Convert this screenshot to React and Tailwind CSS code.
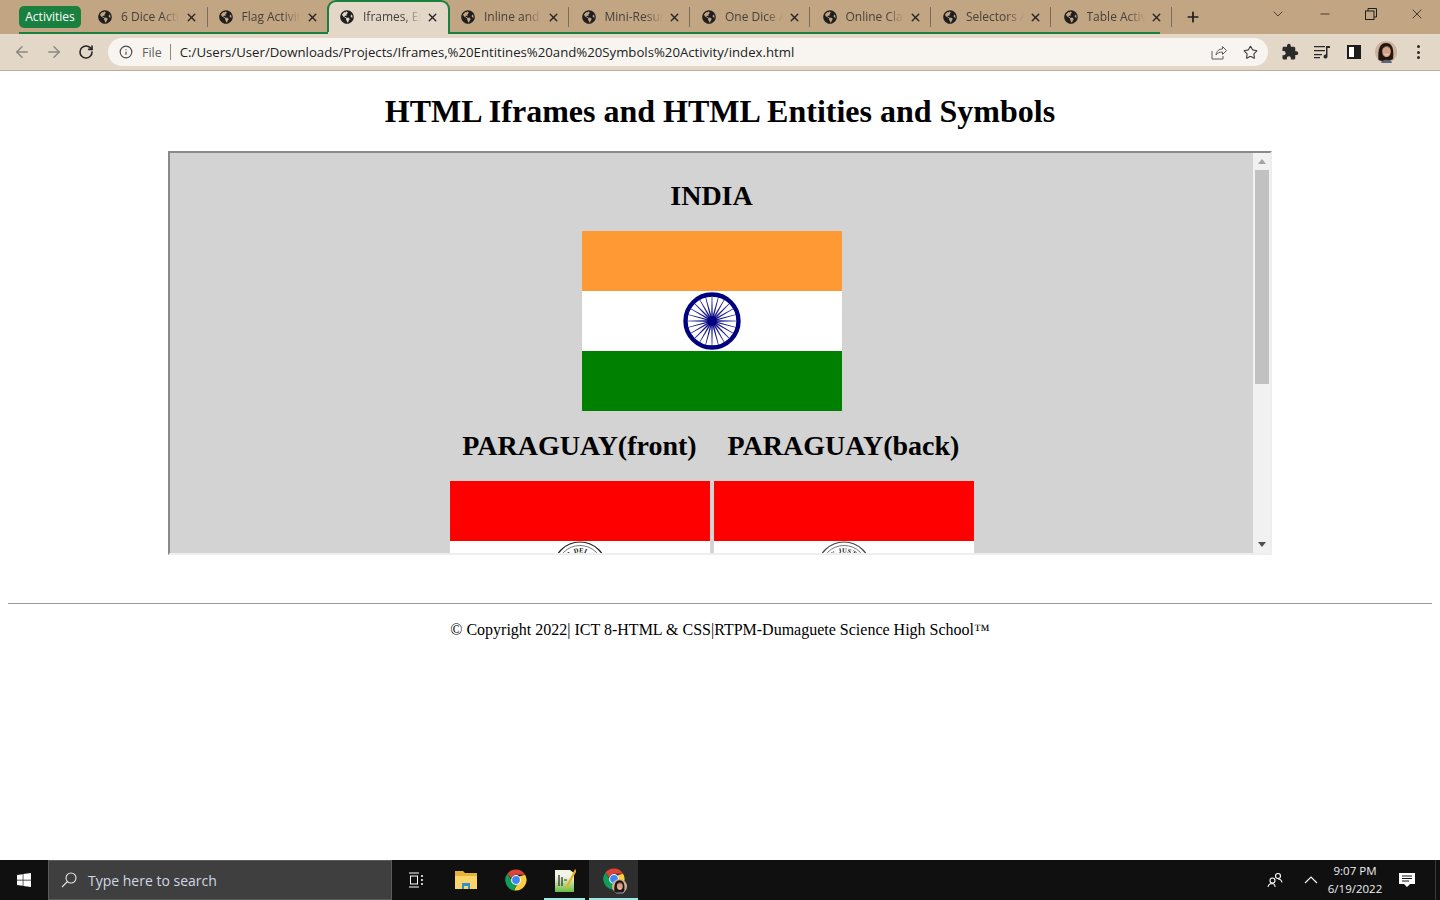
import React from 'react';
import { ArrowLeft, ArrowRight, RotateCw, Info, Star, X, Plus, ChevronDown, Minus } from 'lucide-react';
import { FaGlobeAmericas, FaWindows } from 'react-icons/fa';
import { MdExtension } from 'react-icons/md';

const tabs = [
  { title: '6 Dice Activity' },
  { title: 'Flag Activity' },
  { title: 'Iframes, Entities', active: true },
  { title: 'Inline and Block', afterActive: true },
  { title: 'Mini-Resume', afterActive: true },
  { title: 'One Dice Activity', afterActive: true },
  { title: 'Online Class', afterActive: true },
  { title: 'Selectors Activity', afterActive: true },
  { title: 'Table Activity', afterActive: true },
];

const Tab = ({ title, active, afterActive }) => (
  <div className={active
    ? 'relative z-10 -mx-px flex h-full w-[122.5px] shrink-0 items-center rounded-t-[9px] border-x-2 border-t-2 border-[#1a8040] bg-[#e3d7c8] pb-[2px] pl-[11px]'
    : `relative flex h-full w-[120.5px] shrink-0 items-center ${afterActive ? 'pl-[12.5px]' : 'pl-[11px]'}`}>
    <FaGlobeAmericas className="h-[14px] w-[14px] shrink-0 text-[#1f1f1f]" />
    <span className="ml-[9px] w-[58px] overflow-hidden whitespace-nowrap text-[12px] text-[#45413b] [mask-image:linear-gradient(to_right,black_70%,transparent_100%)]">
      {title}
    </span>
    <X className={`${active || afterActive ? 'ml-[5px]' : 'ml-[6px]'} h-[13px] w-[13px] shrink-0 text-[#262626]`} strokeWidth={2.6} />
    {!active && <span className="absolute right-0 top-[7px] h-[20px] w-px bg-[#7a6c5b]" />}
  </div>
);

const Chakra = () => {
  const spokes = Array.from({ length: 24 }, (_, i) => i * 15);
  return (
    <svg viewBox="0 0 60 60" className="h-[60px] w-[60px]">
      <circle cx="30" cy="30" r="26.5" fill="white" stroke="#000080" strokeWidth="4.4" />
      {spokes.map((a) => (
        <polygon key={a} points="29.1,30 30.9,30 30.3,5 29.7,5" fill="#1a1a8c" transform={`rotate(${a} 30 30)`} />
      ))}
      <circle cx="30" cy="30" r="4.8" fill="#000080" />
    </svg>
  );
};

// only the top of each seal shows above the frame's bottom edge
const Seal = ({ id, label, stroke }) => (
  <svg viewBox="0 0 60 60" className="h-[60px] w-[60px]">
    <circle cx="30" cy="27.5" r="26.5" fill="white" stroke={stroke} strokeWidth="1.200" />
    <circle cx="30" cy="27.5" r="23" fill="none" stroke="#777" strokeWidth="1" />
    <path id={id} d="M14 27.500 A16 16 0 0 1 46 27.500" fill="none" />
    <text fontFamily="'Liberation Serif', serif" fontSize="6.500" fontWeight="700" fill="#111" textAnchor="middle" letterSpacing="0.3">
      <textPath href={`#${id}`} startOffset="50%">{label}</textPath>
    </text>
  </svg>
);

const Flag = ({ top, mid, bottom, children }) => (
  <div className="w-[260px]">
    <div className="h-[60px]" style={{ backgroundColor: top }} />
    <div className="flex h-[60px] items-center justify-center" style={{ backgroundColor: mid }}>{children}</div>
    <div className="h-[60px]" style={{ backgroundColor: bottom }} />
  </div>
);

const ChromeLogo = ({ size = 24 }) => (
  <svg viewBox="0 0 48 48" width={size} height={size}>
    <path fill="#db4437" d="M24 3a21 21 0 0 1 18.200 10.500H24a10.500 10.500 0 0 0-10 7.300L7.100 11A21 21 0 0 1 24 3z" />
    <path fill="#0f9d58" d="M24 45A21 21 0 0 1 7.100 11L16 26.500a10.500 10.500 0 0 0 11 7.100L19 44.400A21 21 0 0 1 24 45z" />
    <path fill="#ffcd40" d="M42.200 13.500A21 21 0 0 1 20 44.600l9.100-15.700A10.500 10.500 0 0 0 31 16.500z" />
    <circle cx="24" cy="24" r="9.800" fill="white" />
    <circle cx="24" cy="24" r="7.800" fill="#4285f4" />
  </svg>
);

const Avatar = ({ size = 22 }) => (
  <svg viewBox="0 0 22 22" width={size} height={size}>
    <circle cx="11" cy="11" r="11" fill="#c9b29b" />
    <path d="M3.500 19 C2.500 8 5 2 11 2 C17.500 2 19 8 18 18 L14 20 L7 20 Z" fill="#231512" />
    <ellipse cx="11.500" cy="10.500" rx="4.300" ry="5.500" fill="#d6a287" />
    <path d="M7.500 7.500 C9 6 13 5 15.500 8 C14 5 9 4.500 7.500 7.500 Z" fill="#231512" />
    <path d="M9.500 13.200 C10.500 14 12.500 14 13.500 13.200" stroke="#fff" strokeWidth="0.700" fill="none" />
    <path d="M6 22 C7 18 16 17.500 17 22 Z" fill="#5b6478" />
  </svg>
);

const BrowserChrome = () => (
  <div className="shrink-0 font-['Open_Sans',sans-serif]">
    <div className="flex h-[34px] bg-[#c2a583]">
      <div className="relative ml-[19px] flex h-full items-stretch">
        <div className="mt-[6px] flex h-[22px] w-[62px] items-center justify-center rounded-[5px] bg-[#1a8040] text-[12px] text-white">Activities</div>
        <div className="ml-[6px] flex h-full">
          {tabs.map((t) => (
            <Tab key={t.title} {...t} />
          ))}
        </div>
        <div className="absolute bottom-0 left-0 h-[2px] w-[1141px] bg-[#1a8040]" />
        <div className="absolute bottom-0 left-[309px] z-20 h-[2px] w-[120px] bg-[#e3d7c8]" />
      </div>
      <Plus className="ml-[13px] mt-[9px] h-[16px] w-[16px] text-[#1f1f1f]" strokeWidth={2.6} />
      <div className="ml-auto flex h-full items-start">
        <ChevronDown className="mr-[32px] mt-[6px] h-[16px] w-[16px] text-[#3a342c]" strokeWidth={1.3} />
        <Minus className="mr-[33px] mt-[7px] h-[14px] w-[14px] text-[#1f1f1f]" strokeWidth={1.3} />
        <svg viewBox="0 0 12 12" className="mr-[32px] mt-[8px] h-[12px] w-[12px] text-[#1f1f1f]" fill="none" stroke="currentColor">
          <path d="M3 3V.5h8.500V9H9" />
          <rect x=".5" y="3" width="8.500" height="8.500" />
        </svg>
        <X className="mr-[15px] mt-[6px] h-[16px] w-[16px] text-[#1f1f1f]" strokeWidth={1.2} />
      </div>
    </div>
    <div className="flex h-[37px] items-center border-b border-[#b9ad9f] bg-[#e3d7c8]">
      <ArrowLeft className="ml-[13px] h-[18px] w-[18px] text-[#8d8881]" strokeWidth={2} />
      <ArrowRight className="ml-[14px] h-[18px] w-[18px] text-[#8d8881]" strokeWidth={2} />
      <RotateCw className="ml-[15px] h-[16px] w-[16px] text-[#262626]" strokeWidth={2.4} />
      <div className="ml-[14px] flex h-[28px] w-[1160px] items-center rounded-full bg-[#f8f5f1] pl-[11px] pr-[10px]">
        <Info className="h-[14px] w-[14px] text-[#4a4a4a]" strokeWidth={2} />
        <span className="ml-[9px] pt-[2px] text-[12.5px] text-[#5f5f5f]">File</span>
        <span className="ml-[8px] h-[16px] w-px bg-[#8d8881]" />
        <span className="ml-[9px] whitespace-nowrap pt-[2px] text-[13.2px] text-[#222]">C:/Users/User/Downloads/Projects/Iframes,%20Entitines%20and%20Symbols%20Activity/index.html</span>
        <svg viewBox="0 0 16 16" className="ml-auto h-[16px] w-[16px] text-[#5c5c5c]" fill="none" stroke="currentColor" strokeWidth="1">
          <path d="M1 7v8h11v-3" />
          <path d="M5 11c.5-4 3-6 6.500-6V2.500L15.500 6.500l-4 4V8c-3 0-5 1-6.500 3z" />
        </svg>
        <Star className="ml-[16px] h-[15px] w-[15px] text-[#3f3f3f]" strokeWidth={1.8} />
      </div>
      <MdExtension className="ml-[13px] h-[18px] w-[18px] text-[#2a2a2a]" />
      <svg viewBox="0 0 16 14" className="ml-[15px] h-[14px] w-[16px] text-[#2a2a2a]" fill="currentColor">
        <path d="M0 1h11v1.300H0zM0 5h11v1.300H0zM0 9h8v1.300H0zM0 12h6v1.300H0z" />
        <path d="M12 1h4v2h-2.500v8.500a2 2 0 1 1-1.500-1.900z" />
      </svg>
      <div className="ml-[17px] flex h-[14px] w-[14px] justify-end border-2 border-[#1c1c1c] bg-white">
        <div className="h-full w-[5px] bg-[#1c1c1c]" />
      </div>
      <div className="ml-[14px]"><Avatar /></div>
      <div className="ml-[20px] flex flex-col gap-[2.500px]">
        <span className="h-[3px] w-[3px] rounded-full bg-[#2a2a2a]" />
        <span className="h-[3px] w-[3px] rounded-full bg-[#2a2a2a]" />
        <span className="h-[3px] w-[3px] rounded-full bg-[#2a2a2a]" />
      </div>
    </div>
  </div>
);

const FlagFrame = () => (
  <div className="mx-[168px] mt-[21px] flex h-[404px] overflow-hidden border-2 border-b-[#eeeeee] border-l-[#8a8a8a] border-r-[#eeeeee] border-t-[#8a8a8a] bg-[#d3d3d3]">
    <div className="flex-1 overflow-hidden text-center font-['Liberation_Serif',serif]">
      <h2 className="mt-[27px] text-[28px] font-bold leading-[32px] text-black">INDIA</h2>
      <div className="mt-[19px] flex justify-center">
        <Flag top="#ff9933" mid="#ffffff" bottom="#008000"><Chakra /></Flag>
      </div>
      <div className="mt-[19px] flex justify-center gap-[4px]">
        <h2 className="w-[260px] text-[28px] font-bold leading-[32px] text-black">PARAGUAY(front)</h2>
        <h2 className="w-[260px] text-[28px] font-bold leading-[32px] text-black">PARAGUAY(back)</h2>
      </div>
      <div className="mt-[19px] flex justify-center gap-[4px]">
        <Flag top="#ff0000" mid="#ffffff" bottom="#0038a8"><Seal id="seal-front" label="REPUBLICA DEL PARAGUAY" stroke="#222" /></Flag>
        <Flag top="#ff0000" mid="#ffffff" bottom="#0038a8"><Seal id="seal-back" label="PAZ Y JUSTICIA" stroke="#444" /></Flag>
      </div>
    </div>
    <div className="flex w-[17px] shrink-0 flex-col items-center bg-[#f1f1f1]">
      <span className="mt-[6px] h-0 w-0 border-x-[4px] border-b-[5px] border-x-transparent border-b-[#a3a3a3]" />
      <div className="mt-[6px] h-[214px] w-[14px] bg-[#c1c1c1]" />
      <span className="mb-[6px] mt-auto h-0 w-0 border-x-[4px] border-t-[5px] border-x-transparent border-t-[#505050]" />
    </div>
  </div>
);

const Taskbar = () => (
  <div className="flex h-[40px] shrink-0 items-stretch bg-[#101010] font-['Open_Sans',sans-serif] text-white">
    <div className="flex w-[48px] items-center justify-center">
      <FaWindows className="h-[16px] w-[16px]" />
    </div>
    <div className="flex w-[344px] items-center border border-[#5b5b5b] bg-[#3f3f3f] pl-[12px]">
      <svg viewBox="0 0 16 16" className="h-[16px] w-[16px] text-[#e6e6e6]" fill="none" stroke="currentColor" strokeWidth="1.100">
        <circle cx="10" cy="6" r="5" />
        <path d="M6.500 9.500 1 15" />
      </svg>
      <span className="ml-[11px] text-[14px] text-[#cfd8e6]">Type here to search</span>
    </div>
    <div className="flex w-[48px] items-center justify-center">
      <svg viewBox="0 0 16 16" className="h-[16px] w-[16px]" fill="none" stroke="white" strokeWidth="1">
        <path d="M1 1h10M1 15h10" />
        <rect x="2.500" y="4" width="7" height="8" />
        <path d="M13 4h2M13 8h2M13 12h2" strokeWidth="1.500" />
      </svg>
    </div>
    <div className="flex w-[52px] items-center justify-center">
      <svg viewBox="0 0 24 20" className="h-[20px] w-[24px]">
        <path d="M1 1h8l2 2h12v4H1z" fill="#e8b23a" />
        <path d="M1 6h22v13H1z" fill="#fbd568" />
        <path d="M8 13h8v6h-2v-3h-4v3H8z" fill="#2d8fd6" />
      </svg>
    </div>
    <div className="flex w-[48px] items-center justify-center"><ChromeLogo /></div>
    <div className="relative flex w-[49px] items-center justify-center">
      <svg viewBox="0 0 22 25" className="h-[25px] w-[22px]">
        <defs>
          <linearGradient id="notepad-paper" x1="0" y1="0" x2="0" y2="1">
            <stop offset="0.3" stopColor="#f2f5e4" />
            <stop offset="1" stopColor="#6cbb3c" />
          </linearGradient>
        </defs>
        <path d="M1 2h15l4 3v19H1z" fill="url(#notepad-paper)" />
        <path d="M5 7v11M8 9v9" stroke="#333" strokeWidth="1.300" />
        <path d="M10 12h3" stroke="#333" strokeWidth="1" />
        <path d="M21 1 12 18l-1 3 3-2L22.500 3z" fill="#e9b022" />
      </svg>
      <span className="absolute inset-x-[4px] bottom-0 h-[2px] bg-[#9fe8e4]" />
    </div>
    <div className="relative flex w-[49px] items-center justify-center bg-[#2e2e2e] pb-[2px]">
      <ChromeLogo />
      <span className="absolute left-[23px] top-[19px]"><Avatar size={15} /></span>
      <span className="absolute inset-x-0 bottom-0 h-[2px] bg-[#9fe8e4]" />
    </div>
    <div className="ml-auto flex items-center">
      <svg viewBox="0 0 16 16" className="h-[16px] w-[16px]" fill="none" stroke="white" strokeWidth="1.100">
        <circle cx="5.500" cy="8.500" r="2.500" />
        <circle cx="11" cy="4" r="2.500" />
        <path d="M1 15c.5-2.500 2-3.500 4.500-3.500M8 15c0-2 0-3-2.500-3.500M11 7c2 0 3.500 1 4 3.500" />
      </svg>
      <svg viewBox="0 0 14 8" className="ml-[21px] h-[8px] w-[14px]" fill="none" stroke="white" strokeWidth="1.100">
        <path d="M1 7l6-6 6 6" />
      </svg>
      <div className="ml-[7px] flex w-[60px] flex-col items-center text-[11.500px] leading-[18px] text-[#eeeeee]">
        <span>9:07 PM</span>
        <span>6/19/2022</span>
      </div>
      <svg viewBox="0 0 16 16" className="ml-[14px] h-[16px] w-[16px]" fill="white">
        <path d="M0 1h16v11h-5l-3 3-3-3H0z" />
        <path d="M3 4h10M3 6.500h10M3 9h7" stroke="#101010" strokeWidth="1" />
      </svg>
      <div className="ml-[20px] h-full w-[5px] border-l border-[#3a3a3a]" />
    </div>
  </div>
);

const App = () => {
  return (
    <div className="flex h-screen w-full flex-col overflow-hidden bg-white">
      <BrowserChrome />
      <main className="flex-1 overflow-hidden font-['Liberation_Serif',serif] text-black">
        <h1 className="mt-[22px] text-center text-[32px] font-bold leading-[37px]">HTML Iframes and HTML Entities and Symbols</h1>
        <FlagFrame />
        <hr className="mx-[8px] mt-[48px] border-t border-[#9a9a9a]" />
        <p className="mt-[17px] text-center text-[16px] leading-[18px]">© Copyright 2022| ICT 8-HTML &amp; CSS|RTPM-Dumaguete Science High School™</p>
      </main>
      <Taskbar />
    </div>
  );
};

export default App;
